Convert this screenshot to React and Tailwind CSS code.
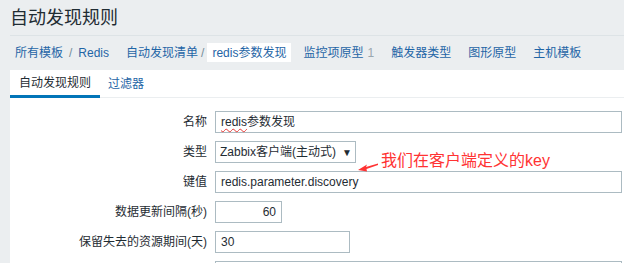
import React from 'react'

const font = { fontFamily: '"Liberation Sans", Arial, "Noto Sans CJK SC", sans-serif' }

const Field = ({ children, className = '' }) => (
  <div className={`h-[22px] border border-[#acbbc2] bg-white flex items-center px-[5px] text-[12px] text-[#1f2c33] ${className}`}>
    {children}
  </div>
)

const Row = ({ label, children }) => (
  <>
    <div className="h-[22px] flex items-center justify-end text-[12px] text-[#1f2c33]">{label}</div>
    <div className="h-[22px] flex items-center">{children}</div>
  </>
)

const App = () => {
  return (
    <div className="relative h-screen bg-[#ebeef0] overflow-hidden" style={font}>
      <div className="pl-[10px]">
        <div className="h-[36px] border-b border-[#dde3e6] pt-[6px]">
          <h1 className="text-[18px] leading-[24px] text-[#1f2c33]">自动发现规则</h1>
        </div>

        <div className="mt-[7px] h-[19px] flex items-center text-[12px] text-[#1f65a6]">
          <span className="ml-[5px]">所有模板</span>
          <span className="mx-[6px] text-[#768d99]">/</span>
          <span>Redis</span>
          <span className="ml-[17px]">自动发现清单</span>
          <span className="mx-[3px] text-[#768d99]">/</span>
          <span className="h-[19px] px-[5px] bg-white flex items-center">redis参数发现</span>
          <span className="ml-[12px]">监控项原型</span>
          <span className="ml-[4px] text-[#9aa7ae]">1</span>
          <span className="ml-[17px]">触发器类型</span>
          <span className="ml-[17px]">图形原型</span>
          <span className="ml-[17px]">主机模板</span>
        </div>

        <div className="mt-[8px] bg-white min-h-[200px]">
          <div className="flex h-[28px] border-b border-[#ebeef0]">
            <div className="h-[28px] px-[9px] flex items-center border-b-[3px] border-[#0275b8] text-[12px] text-[#1f2c33]">
              自动发现规则
            </div>
            <div className="h-[28px] px-[8px] flex items-center text-[12px] text-[#1f65a6]">
              过滤器
            </div>
          </div>

          <div className="pt-[13px] grid grid-cols-[197px_1fr] gap-x-2 gap-y-2">
            <Row label="名称">
              <Field className="w-[407px] border-[#1f65a6]">
                <span className="underline decoration-wavy decoration-[#e53935] decoration-1 underline-offset-2">redis</span>
                <span>参数发现</span>
              </Field>
            </Row>
            <Row label="类型">
              <Field className="w-[141px] justify-between pl-[4px] pr-[3px]">
                <span>Zabbix客户端(主动式)</span>
                <span className="text-[10px]">▼</span>
              </Field>
            </Row>
            <Row label="键值">
              <Field className="w-[407px]">redis.parameter.discovery</Field>
            </Row>
            <Row label="数据更新间隔(秒)">
              <Field className="w-[67px] justify-end">60</Field>
            </Row>
            <Row label="保留失去的资源期间(天)">
              <Field className="w-[135px]">30</Field>
            </Row>
            <Row label="">
              <Field className="w-[407px]" />
            </Row>
          </div>
        </div>
      </div>

      <div className="absolute left-[357px] top-[161px]">
        <svg width="22" height="11" viewBox="0 0 22 11">
          <path d="M1 9 L10 3.5 L9 6 L21 2.5 L21 4 L9.5 8 L10 10.5 Z" fill="#ff3333" />
        </svg>
      </div>
      <div className="absolute left-[381px] top-[150px] text-[16px] leading-[22px] text-[#ff3333]">
        我们在客户端定义的key
      </div>
    </div>
  )
}

export default App
